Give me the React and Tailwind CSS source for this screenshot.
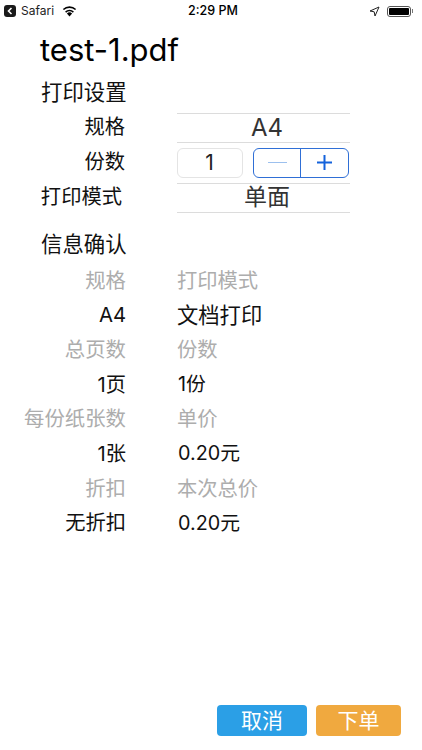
function Pair({ left, right, grey, price }) {
  const l = grey ? "text-[#adadad] text-[20.4px]" : "text-[#111] text-[20.3px]";
  const r = grey
    ? "ml-[51px] text-[#adadad] text-[20.3px]"
    : price
      ? "ml-[52px] text-[#111] text-[19.8px]"
      : "ml-[51px] text-[#111] text-[21.3px]";
  return (
    <div className="flex h-[34.7px] items-center">
      <div className={"w-[126px] text-right whitespace-nowrap " + l}>{left}</div>
      <div className={"whitespace-nowrap " + r}>{right}</div>
    </div>
  );
}

function Cell({ children, size }) {
  return (
    <div className={"w-[173px] h-[30px] pl-[7px] flex items-center justify-center border-y border-[#dcdcdc] text-[#333] " + size}>{children}</div>
  );
}

function Wifi() {
  return (
    <svg width="15" height="12" viewBox="0 0 15 11" className="ml-[8px]">
      <path d="M7.5 11 L4.9 7.9 A4 4 0 0 1 10.1 7.9 Z" fill="#000" />
      <path d="M3.6 6.6 A6 6 0 0 1 11.4 6.6" stroke="#000" strokeWidth="1.6" fill="none" />
      <path d="M1.4 4 A9 9 0 0 1 13.6 4" stroke="#000" strokeWidth="1.6" fill="none" />
    </svg>
  );
}

export default function App() {
  return (
    <div className="w-[422px] h-[750px] flex flex-col bg-white text-black font-['Inter','Noto_Sans_CJK_SC',sans-serif] overflow-hidden">
      <div className="h-[22px] flex items-center px-[4px] text-[13px] relative">
        <div className="w-[12px] h-[12px] bg-[#1a1a1a] rounded-[3px] flex items-center justify-center">
          <svg width="6" height="8" viewBox="0 0 6 8"><path d="M4.5 1 L1.5 4 L4.5 7" stroke="#fff" strokeWidth="1.6" fill="none" /></svg>
        </div>
        <span className="ml-[5px] text-[12px] text-[#222]">Safari</span>
        <Wifi />
        <span className="absolute left-[188px] text-[12.5px] font-medium">2:29 PM</span>
        <div className="ml-auto flex items-center mr-[5px]">
          <svg width="11" height="11" viewBox="0 0 11 11" className="mr-[7px]">
            <path d="M10 1 L1 5 L5.2 5.8 L6 10 Z" fill="none" stroke="#222" strokeWidth="1" />
          </svg>
          <div className="w-[24px] h-[11px] border border-[#555] rounded-[3px] p-[1px]">
            <div className="w-full h-full bg-black rounded-[1px]" />
          </div>
          <div className="w-[1px] h-[4px] bg-[#777] ml-[1px]" />
        </div>
      </div>

      <div className="pl-[40px] mt-[4px] h-[46px] flex items-center text-[31px] leading-none">test-1.pdf</div>
      <div className="pl-[41px] h-[34px] mt-[3px] flex items-center text-[21.4px] text-[#111]">打印设置</div>

      <div className="flex items-center mt-[1px] h-[35px]">
        <div className="w-[125px] text-right text-[20.3px] text-[#111]">规格</div>
        <div className="ml-[52px]"><Cell size="text-[24px]">A4</Cell></div>
      </div>
      <div className="flex items-center h-[35px]">
        <div className="w-[125px] text-right text-[20.3px] text-[#111]">份数</div>
        <div className="ml-[52px] flex items-center">
          <div className="w-[66px] h-[30px] pr-[1px] flex items-center justify-center border border-[#e4e4e4] rounded-[6px] text-[21px] text-[#222]">1</div>
          <div className="ml-[10px] w-[96px] h-[30px] flex border border-[#2f6fd6] rounded-[6px]">
            <div className="w-[47px] flex items-center justify-center border-r border-[#2f6fd6]">
              <div className="w-[19px] h-[1.5px] bg-[#9cc0ee]" />
            </div>
            <div className="flex-1 flex items-center justify-center">
              <svg width="17" height="17" viewBox="0 0 17 17"><path d="M8.5 1 V16 M1 8.5 H16" stroke="#1463dc" strokeWidth="2" /></svg>
            </div>
          </div>
        </div>
      </div>
      <div className="flex items-center h-[35px]">
        <div className="w-[122px] text-right text-[20.3px] text-[#111]">打印模式</div>
        <div className="ml-[55px]"><Cell size="text-[23px]">单面</Cell></div>
      </div>

      <div className="pl-[41px] h-[34px] mt-[12.5px] flex items-center text-[21.4px] text-[#111]">信息确认</div>
      <div className="mt-[2px]">
        <Pair grey left="规格" right="打印模式" />
        <Pair left="A4" right="文档打印" />
        <Pair grey left="总页数" right="份数" />
        <Pair price left="1页" right="1份" />
        <Pair grey left="每份纸张数" right="单价" />
        <Pair price left="1张" right="0.20元" />
        <Pair grey left="折扣" right="本次总价" />
        <Pair price left="无折扣" right="0.20元" />
      </div>

      <div className="mt-auto mb-[14px] flex justify-end pr-[21px] gap-[9px]">
        <div className="w-[90px] h-[31px] rounded-[4px] bg-[#2b9fe6] text-white text-[21px] flex items-center justify-center">取消</div>
        <div className="w-[85px] h-[31px] rounded-[4px] bg-[#f0a93f] text-white text-[21px] flex items-center justify-center">下单</div>
      </div>
    </div>
  );
}
